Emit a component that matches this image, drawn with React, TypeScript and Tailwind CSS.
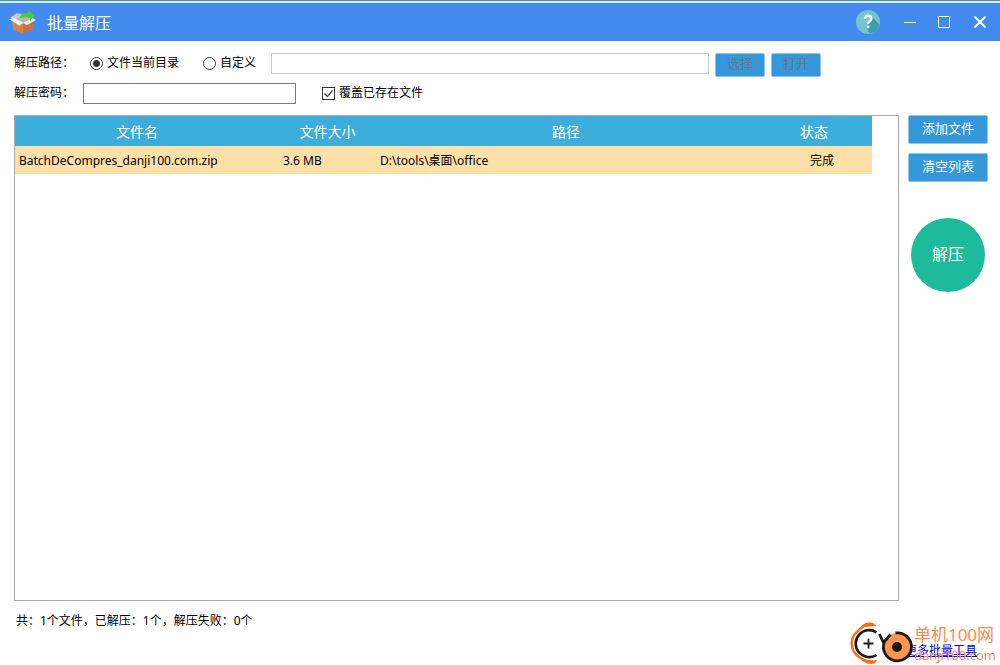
import { useState } from "react";

interface ArchiveRow {
  name: string;
  size: string;
  path: string;
  status: string;
}

const ROWS: ArchiveRow[] = [
  {
    name: "BatchDeCompres_danji100.com.zip",
    size: "3.6 MB",
    path: "D:\\tools\\桌面\\office",
    status: "完成",
  },
];

function BoxIcon() {
  return (
    <svg aria-hidden="true" className="h-6 w-7 shrink-0" viewBox="12 12 84 72">
      <path d="M25 40 58 50v33L27 71z" fill="#d9804f" />
      <path d="M91 40 58 50v33l31-12z" fill="#c4703f" />
      <path d="m26 41 18-16 42 8 5 8-33 12z" fill="#b4b8bc" />
      <path d="m18 36 20-14 20 2-8 10-18 8z" fill="#c9cccf" />
      <path d="m16 40 14-4 28 14-12 9z" fill="#eff0f1" />
      <path d="m96 42-10-5-28 13 10 8z" fill="#e6e8ea" />
      <path d="M46 37c4-13 14-17 25-16v-8l22 15-15 17v-9c-12-3-22-3-32 1z" fill="#3dce38" />
    </svg>
  );
}

function HelpIcon() {
  return (
    <svg aria-hidden="true" className="size-6" viewBox="0 0 24 24">
      <circle cx="12" cy="12" fill="#72c5cc" r="12" />
      <path d="m15 6 8.500 8.500A12 12 0 0 1 14 23.800L10 18l3-5z" fill="#3f9ea9" />
      <path
        d="M8.800 8.700c.3-2 1.600-2.900 3.400-2.900 2 0 3.200 1.100 3.200 2.700 0 2.700-3.300 2.700-3.300 5.300"
        fill="none"
        stroke="#fff"
        strokeWidth="2.400"
      />
      <rect fill="#fff" height="2.600" width="2.600" x="10.800" y="15.600" />
    </svg>
  );
}

/** Site badge that floats over the bottom right corner. */
function SiteBadge() {
  return (
    <div className="pointer-events-none absolute right-0 bottom-0 flex items-end">
      <svg aria-hidden="true" className="h-[43px] w-16" viewBox="0 0 64 43">
        <path
          d="M14 4C9 7 7 10 4 13c-3 5-3 12 0 17 3 4 7 7 12 9"
          fill="none"
          stroke="#ff6f0f"
          strokeWidth="2.400"
        />
        <path
          d="M8 8c3-4 6-7 10-7.500 4-.5 7 1 8.500 4C22 4 15 4 8 8zM8 34c4 5 8 8 13 8 3 0 5-1 6-4-7 1-13 0-19-4z"
          fill="#ff6f0f"
        />
        <path
          d="M26.500 10.300A13.500 13.500 0 1 0 26.500 33"
          fill="none"
          stroke="#1d1717"
          strokeWidth="2.600"
        />
        <path d="M18.500 16.500v10M13.500 21.500h10" stroke="#1d1717" strokeWidth="1.800" />
        <circle cx="47" cy="25" fill="#ff9650" r="14" />
        <path
          d="M45.500 11A14 14 0 1 1 34.500 19.500L40.500 12.500M29.500 12l4.500 10"
          fill="none"
          stroke="#1d1717"
          strokeWidth="2.800"
        />
        <circle cx="47" cy="25" fill="#1d1717" r="5" />
      </svg>
      <div className="pr-1 text-[#ff8a50]">
        <div className="text-[17px] leading-5">单机100网</div>
        <div className="text-[13px] leading-5">danji100.com</div>
      </div>
    </div>
  );
}

const radioClass =
  "size-[13px] appearance-none rounded-full border border-[#333] bg-white checked:bg-[radial-gradient(circle,#333_3px,#fff_4px)]";
const smallButtonClass =
  "h-6 w-[50px] rounded-xs border border-[#8fc5ec] bg-[#3498db] pb-1 text-[13px] leading-4 text-[#64798c]";
const sideButtonClass =
  "h-[29px] w-full rounded-xs border border-[#8fc5ec] bg-[#3498db] pb-1 text-[13px] leading-4 text-white";

export default function App() {
  const [target, setTarget] = useState<"current" | "custom">("current");
  const [customPath, setCustomPath] = useState("");
  const [password, setPassword] = useState("");
  const [overwrite, setOverwrite] = useState(true);
  const [rows, setRows] = useState(ROWS);

  const isCustom = target === "custom";

  return (
    <div className="relative flex min-h-screen flex-col bg-white font-['Noto_Sans','Noto_Sans_CJK_SC',sans-serif] text-xs text-black">
      <header className="flex h-[41px] shrink-0 items-center border-t-3 border-[#dcebf5] bg-[#438aee] pr-3.5 pl-2 text-white before:absolute before:inset-x-0 before:top-0 before:h-px before:bg-[#3d97bb]">
        <BoxIcon />
        <h1 className="ml-[11px] flex-1 pt-0.5 text-base">批量解压</h1>
        <button aria-label="帮助" className="mr-6" type="button">
          <HelpIcon />
        </button>
        <button aria-label="最小化" className="mr-[22px]" type="button">
          <svg className="size-3" viewBox="0 0 12 12">
            <path d="M0 6.500h12" stroke="#fff" />
          </svg>
        </button>
        <button aria-label="最大化" className="mr-6" type="button">
          <svg className="size-3" viewBox="0 0 12 12">
            <path d="M.5.500h11v11H.5z" fill="none" stroke="#fff" />
          </svg>
        </button>
        <button aria-label="关闭" type="button">
          <svg className="size-3" viewBox="0 0 12 12">
            <path d="m.5.500 11 11m0-11-11 11" stroke="#fff" strokeWidth="2" />
          </svg>
        </button>
      </header>

      <div className="mt-2 flex h-7 items-center pr-[179px] pl-3.5">
        <span className="w-[76px]">解压路径：</span>
        <label className="flex items-center gap-1">
          <input
            checked={!isCustom}
            className={radioClass}
            name="target"
            onChange={() => setTarget("current")}
            type="radio"
          />
          文件当前目录
        </label>
        <label className="ml-6 flex items-center gap-1">
          <input
            checked={isCustom}
            className={radioClass}
            name="target"
            onChange={() => setTarget("custom")}
            type="radio"
          />
          自定义
        </label>
        <input
          aria-label="自定义路径"
          className="ml-[15px] h-[21px] min-w-0 flex-1 border border-[#ccc] bg-white px-1"
          disabled={!isCustom}
          onChange={(event) => setCustomPath(event.target.value)}
          type="text"
          value={customPath}
        />
        <div className="ml-1.5 flex gap-1.5 pt-1">
          <button className={smallButtonClass} disabled={!isCustom} type="button">
            选择
          </button>
          <button className={smallButtonClass} disabled={!isCustom} type="button">
            打开
          </button>
        </div>
      </div>

      <div className="mt-1 flex h-6 items-center pl-3.5">
        <label className="w-[69px]" htmlFor="password">
          解压密码：
        </label>
        <input
          className="h-[21px] w-[213px] border border-[#7a7a7a] bg-white px-1"
          id="password"
          onChange={(event) => setPassword(event.target.value)}
          type="text"
          value={password}
        />
        <label className="ml-[26px] flex items-center gap-1">
          <span className="grid size-[13px]">
            <input
              checked={overwrite}
              className="peer col-start-1 row-start-1 size-[13px] appearance-none border border-[#333] bg-white"
              onChange={(event) => setOverwrite(event.target.checked)}
              type="checkbox"
            />
            <svg
              aria-hidden="true"
              className="pointer-events-none invisible col-start-1 row-start-1 size-[13px] peer-checked:visible"
              viewBox="0 0 13 13"
            >
              <path d="m2.500 6.500 3 3 5-6" fill="none" stroke="#444" strokeWidth="1.300" />
            </svg>
          </span>
          覆盖已存在文件
        </label>
      </div>

      <main className="mt-2.5 flex flex-1 gap-[9px] pr-3 pl-3.5">
        <div className="min-w-0 flex-1 border border-[#a9a9ae] pr-[26px]">
          <table className="w-full table-fixed border-collapse text-left">
            <colgroup>
              <col className="w-[264px]" />
              <col className="w-[97px]" />
              <col />
              <col className="w-[116px]" />
            </colgroup>
            <thead className="h-[30px] bg-[#3daedb] text-center text-sm text-white">
              <tr>
                <th className="pt-0.5 pr-5 font-normal">文件名</th>
                <th className="pt-0.5 font-normal">文件大小</th>
                <th className="pt-0.5 font-normal">路径</th>
                <th className="pt-0.5 font-normal">状态</th>
              </tr>
            </thead>
            <tbody>
              {rows.map((row) => (
                <tr className="h-7 bg-[#fce0a8]" key={row.name}>
                  <td className="truncate pt-0.5 pl-1">{row.name}</td>
                  <td className="pt-0.5 pl-1">{row.size}</td>
                  <td className="truncate pt-0.5 pl-1">{row.path}</td>
                  <td className="pt-0.5 pl-4 text-center">{row.status}</td>
                </tr>
              ))}
            </tbody>
          </table>
        </div>

        <aside className="flex w-20 flex-col items-center gap-[9px]">
          <button className={sideButtonClass} type="button">
            添加文件
          </button>
          <button className={sideButtonClass} onClick={() => setRows([])} type="button">
            清空列表
          </button>
          <button
            className="mt-[27px] size-[74px] rounded-full bg-[#1dbb9b] pb-0.5 text-base text-white"
            type="button"
          >
            解压
          </button>
        </aside>
      </main>

      <footer className="flex h-16 shrink-0 justify-between pt-3 pr-[23px] pl-4">
        <p>共：1个文件，已解压：1个，解压失败：0个</p>
        <a className="self-end pb-1.5 text-[#00f] underline" href="#more">
          更多批量工具
        </a>
      </footer>

      <SiteBadge />
    </div>
  );
}
